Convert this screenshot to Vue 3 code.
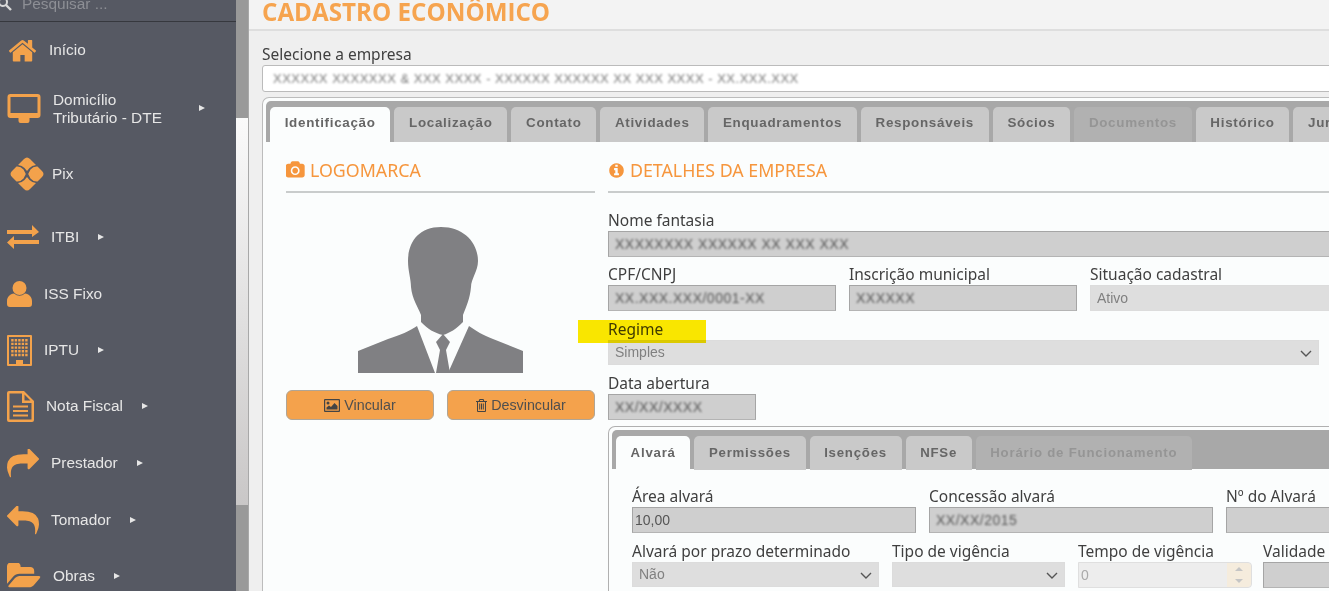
<script setup>
const buildingDots = () => {
  let d = ''
  for (let r = 0; r < 5; r++) {
    for (let c = 0; c < 5; c++) {
      d += `M${4.2 + c * 3.5} ${4 + r * 3.7}h2.4v2.4h-2.4z`
    }
  }
  return d
}

const menu = [
  { label: 'Início', h: 56, w: 29, ih: 23, vb: '35 220 1722 1320', d: 'M1472 992v480q0 26-19 45t-45 19h-384v-384h-256v384h-384q-26 0-45-19t-19-45v-480q0-1 .5-3t.5-3l575-474 575 474q1 2 1 6zm223-69l-62 74q-8 9-21 11h-3q-13 0-21-7l-692-577-692 577q-12 8-24 7-13-2-21-11l-62-74q-8-10-7-23.5t11-21.5l719-599q32-26 76-26t76 26l244 204v-195q0-14 9-23t23-9h192q14 0 23 9t9 23v408l219 182q10 8 11 21.5t-7 23.5z', left: 8 },
  { label: 'Domicílio Tributário - DTE', h: 60, w: 34, ih: 29, vb: '0 0 33 29', d: 'M3 0H30a3 3 0 0 1 3 3V21a3 3 0 0 1-3 3H3a3 3 0 0 1-3-3V3a3 3 0 0 1 3-3ZM3 3V19H30V3ZM11 24H22V27a2 2 0 0 1-2 2H13a2 2 0 0 1-2-2Z', arrow: true, wrap: true },
  { label: 'Pix', h: 70, w: 34, ih: 34, vb: '0 0 34 34', d: 'M14 2Q17-1 20 2L26 8Q22 8.5 19.5 11L17 14L14.5 11Q12 8.5 8 8ZM14 32Q17 35 20 32L26 26Q22 25.5 19.5 23L17 20L14.5 23Q12 25.5 8 26ZM2 14Q-1 17 2 20L6.5 24.5Q10.5 25 13.5 21.5L15.8 17L13.5 12.5Q10.5 9 6.5 9.5ZM32 14Q35 17 32 20L27.5 24.5Q23.5 25 20.5 21.5L18.2 17L20.5 12.5Q23.5 9 27.5 9.5Z', left: 10, small: true },
  { label: 'ITBI', h: 58, w: 32, ih: 24, vb: '0 0 32 24', d: 'M0 5H25V0L32 7L25 12V9H0ZM32 15H7V11L0 17.5L7 24V19H32Z', arrow: true },
  { label: 'ISS Fixo', h: 56, w: 25, ih: 26, vb: '0 0 25 26', d: 'M12.5 0a7 7 0 1 1 0 14a7 7 0 1 1 0-14ZM0 23V20C0 16 3 13 7 12.5Q12.5 17 18 12.5C22 13 25 16 25 20V23Q25 26 22 26H3Q0 26 0 23Z' },
  { label: 'IPTU', h: 56, w: 25, ih: 31, vb: '0 0 25 31', d: 'M1 0H24a1 1 0 0 1 1 1V30a1 1 0 0 1-1 1H1a1 1 0 0 1-1-1V1a1 1 0 0 1 1-1ZM2 2V29H9V25H16V29H23V2Z' + buildingDots(), arrow: true },
  { label: 'Nota Fiscal', h: 56, w: 27, ih: 31, vb: '0 0 27 31', d: 'M2 0H17L27 10V29a2 2 0 0 1-2 2H2a2 2 0 0 1-2-2V2a2 2 0 0 1 2-2ZM2.5 2.5V28.5H24.5V12H15V2.5ZM17.5 3.5V9.5H23.5ZM6 14.5H21V16.5H6ZM6 19H21V21H6ZM6 23.5H21V25.5H6Z', arrow: true },
  { label: 'Prestador', h: 58, w: 32, ih: 29, vb: '0 128 1792 1536', d: 'M1792 640q0 26-19 45l-512 512q-19 19-45 19t-45-19-19-45v-256h-224q-98 0-175.5 6t-154 21.5-133 42.5-105.5 69.5-80 101-48.5 138.5-17.5 181q0 55 5 123 0 6 2.5 23.5t2.5 26.5q0 15-8.5 25t-23.5 10q-16 0-28-17-7-9-13-22t-13.5-30-10.5-24q-127-285-127-451 0-199 53-333 162-403 875-403h224v-256q0-26 19-45t45-19 45 19l512 512q19 19 19 45z', arrow: true },
  { label: 'Tomador', h: 56, w: 32, ih: 29, vb: '0 128 1792 1536', d: 'M1792 1120q0 166-127 451-3 7-10.5 24t-13.5 30-13 22q-12 17-28 17-15 0-23.5-10t-8.5-25q0-9 2.5-26.5t2.5-23.5q5-68 5-123 0-101-17.5-181t-48.5-138.5-80-101-105.5-69.5-133-42.5-154-21.5-175.5-6h-224v256q0 26-19 45t-45 19-45-19l-512-512q-19-19-19-45t19-45l512-512q19-19 45-19t45 19 19 45v256h224q713 0 875 403 53 134 53 333z', arrow: true },
  { label: 'Obras', h: 56, w: 34, ih: 26, vb: '0 256 1920 1280', d: 'M1879 952q0 31-31 66l-336 396q-43 51-120.5 86.5t-143.5 35.5h-1088q-34 0-60.5-13t-26.5-43q0-31 31-66l336-396q43-51 120.5-86.5t143.5-35.5h1088q34 0 60.5 13t26.5 43zm-343-344v160h-832q-94 0-197 47.5t-164 119.5l-337 396-5 6q0-4-.5-12.5t-.5-12.5v-960q0-92 66-158t158-66h320q92 0 158 66t66 158v32h544q92 0 158 66t66 158z', arrow: true }
]

const tabs = [
  { label: 'Identificação', active: true },
  { label: 'Localização' },
  { label: 'Contato' },
  { label: 'Atividades' },
  { label: 'Enquadramentos' },
  { label: 'Responsáveis' },
  { label: 'Sócios' },
  { label: 'Documentos', disabled: true },
  { label: 'Histórico' },
  { label: 'Jurídico' }
]

const subTabs = [
  { label: 'Alvará', active: true },
  { label: 'Permissões' },
  { label: 'Isenções' },
  { label: 'NFSe' },
  { label: 'Horário de Funcionamento', disabled: true }
]
</script>

<template>
  <div class="page">
    <aside class="sidebar">
      <div class="search">
        <svg class="search-icon" viewBox="0 0 14 14" width="14" height="14">
          <circle cx="5" cy="5" r="4" fill="none" stroke="#d8d8d8" stroke-width="2" />
          <path d="M8 8l5 5" stroke="#d8d8d8" stroke-width="2.4" />
        </svg>
        <span>Pesquisar ...</span>
      </div>
      <a
        v-for="item in menu"
        :key="item.label"
        class="menu-item"
        :class="{ 'has-wrap': item.wrap, 'is-small': item.small }"
        :style="{ height: `${item.h}px`, paddingLeft: `${item.left || 7}px` }"
      >
        <svg class="menu-icon" :viewBox="item.vb" :width="item.w" :height="item.ih">
          <path :d="item.d" fill-rule="evenodd" />
        </svg>
        <span class="menu-label">{{ item.label }}</span>
        <i v-if="item.arrow" class="caret"></i>
      </a>
    </aside>

    <div class="scrollbar">
      <div class="scroll-thumb"></div>
    </div>

    <main class="main">
      <header class="title-bar">
        <h1>CADASTRO ECONÔMICO</h1>
      </header>

      <div class="content">
        <label class="field-label">Selecione a empresa</label>
        <div class="company-select"><span class="smudge">XXXXXX XXXXXXX & XXX XXXX - XXXXXX XXXXXX XX XXX XXXX - XX.XXX.XXX</span></div>

        <section class="card">
          <nav class="tabs">
            <span
              v-for="tab in tabs"
              :key="tab.label"
              class="tab"
              :class="{ active: tab.active, disabled: tab.disabled }"
            >{{ tab.label }}</span>
          </nav>

          <div class="card-body">
            <div class="logo-col">
              <h2 class="section-title">
                <svg viewBox="0 0 1920 1792" width="19" height="18">
                  <path d="M928 672q119 0 203.5 84.5t84.5 203.5-84.5 203.5-203.5 84.5-203.5-84.5-84.5-203.5 84.5-203.5 203.5-84.5zm704-416q106 0 181 75t75 181v896q0 106-75 181t-181 75h-1408q-106 0-181-75t-75-181v-896q0-106 75-181t181-75h224l51-136q19-49 69.5-84.5t103.5-35.5h512q53 0 103.5 35.5t69.5 84.5l51 136h224zm-704 1152q185 0 316.5-131.5t131.5-316.5-131.5-316.5-316.5-131.5-316.5 131.5-131.5 316.5 131.5 316.5 316.5 131.5z" />
                </svg>
                LOGOMARCA
              </h2>
              <div class="avatar">
                <svg viewBox="0 0 165 148" width="165" height="148">
                  <g fill="#808083">
                    <path d="M83 2C60 2 50 18 50 36C50 46 53 54 53 62C54 74 60 82 63 90L63 97C70 104 76 108 85 110C92 108 98 104 105 97L105 90C108 82 112 74 113 62C113 54 120 46 120 36C120 18 106 2 83 2Z" />
                    <path d="M0 148V126L30 114C42 110 52 106 59 101L77 148Z" />
                    <path d="M165 148V126L135 114C125 110 118 106 111 101L90 148Z" />
                    <path d="M85 109L92 117L88 125L92 148H78L82 125L78 117Z" />
                  </g>
                </svg>
              </div>
              <div class="logo-actions">
                <button type="button" class="btn">
                  <svg viewBox="0 0 16 13" width="16" height="13">
                    <path fill="#444" fill-rule="evenodd" d="M1 0H15a1 1 0 0 1 1 1V12a1 1 0 0 1-1 1H1a1 1 0 0 1-1-1V1a1 1 0 0 1 1-1ZM1.2 1.2V11.8H14.8V1.2ZM4 2.5a1.5 1.5 0 1 1 0 3a1.5 1.5 0 1 1 0-3ZM2.5 10.5V8.5L5 6.5L7 8L10.5 4L13.5 7V10.5Z" />
                  </svg>
                  Vincular
                </button>
                <button type="button" class="btn">
                  <svg viewBox="0 0 11 13" width="11" height="13">
                    <path fill="#444" fill-rule="evenodd" d="M3.5 0H7.5L8.3 2H11V3H10V12a1 1 0 0 1-1 1H2a1 1 0 0 1-1-1V3H0V2H2.7ZM4.2 1L3.9 2H7.1L6.8 1ZM2 3V12H9V3ZM3.2 4.5H4.2V10.5H3.2ZM5 4.5H6V10.5H5ZM6.8 4.5H7.8V10.5H6.8Z" />
                  </svg>
                  Desvincular
                </button>
              </div>
            </div>

            <div class="details-col">
              <h2 class="section-title">
                <svg viewBox="0 0 1792 1792" width="17" height="17">
                  <path d="M1152 1376v-160q0-14-9-23t-23-9h-96v-512q0-14-9-23t-23-9h-320q-14 0-23 9t-9 23v160q0 14 9 23t23 9h96v320h-96q-14 0-23 9t-9 23v160q0 14 9 23t23 9h448q14 0 23-9t9-23zm-128-896v-160q0-14-9-23t-23-9h-192q-14 0-23 9t-9 23v160q0 14 9 23t23 9h192q14 0 23-9t9-23zm640 416q0 209-103 385.5t-279.5 279.5-385.5 103-385.5-103-279.5-279.5-103-385.5 103-385.5 279.5-279.5 385.5-103 385.5 103 279.5 279.5 103 385.5z" />
                </svg>
                DETALHES DA EMPRESA
              </h2>

              <div class="form">
                <div class="highlight"></div>

                <div class="field">
                  <label class="field-label">Nome fantasia</label>
                  <div class="input locked"><span class="smudge">XXXXXXXX XXXXXX XX XXX XXX</span></div>
                </div>

                <div class="row">
                  <div class="field w228">
                    <label class="field-label">CPF/CNPJ</label>
                    <div class="input locked"><span class="smudge">XX.XXX.XXX/0001-XX</span></div>
                  </div>
                  <div class="field w228">
                    <label class="field-label">Inscrição municipal</label>
                    <div class="input locked"><span class="smudge">XXXXXX</span></div>
                  </div>
                  <div class="field w240">
                    <label class="field-label">Situação cadastral</label>
                    <div class="input muted">Ativo</div>
                  </div>
                </div>

                <div class="field w711">
                  <label class="field-label">Regime</label>
                  <div class="input muted select">
                    Simples
                    <svg class="chev" viewBox="0 0 12 7" width="12" height="7"><path d="M1 1l5 5 5-5" /></svg>
                  </div>
                </div>

                <div class="field w148 tight">
                  <label class="field-label">Data abertura</label>
                  <div class="input locked"><span class="smudge">XX/XX/XXXX</span></div>
                </div>

                <section class="card nested">
                  <nav class="tabs sub">
                    <span
                      v-for="tab in subTabs"
                      :key="tab.label"
                      class="tab"
                      :class="{ active: tab.active, disabled: tab.disabled }"
                    >{{ tab.label }}</span>
                  </nav>

                  <div class="nested-body">
                    <div class="row">
                      <div class="field w284">
                        <label class="field-label">Área alvará</label>
                        <div class="input locked flush">10,00</div>
                      </div>
                      <div class="field w284">
                        <label class="field-label">Concessão alvará</label>
                        <div class="input locked"><span class="smudge">XX/XX/2015</span></div>
                      </div>
                      <div class="field w240">
                        <label class="field-label">Nº do Alvará</label>
                        <div class="input locked"></div>
                      </div>
                    </div>
                    <div class="row row-low">
                      <div class="field w247">
                        <label class="field-label">Alvará por prazo determinado</label>
                        <div class="input muted select">
                          Não
                          <svg class="chev" viewBox="0 0 12 7" width="12" height="7"><path d="M1 1l5 5 5-5" /></svg>
                        </div>
                      </div>
                      <div class="field w173">
                        <label class="field-label">Tipo de vigência</label>
                        <div class="input muted select">
                          <svg class="chev" viewBox="0 0 12 7" width="12" height="7"><path d="M1 1l5 5 5-5" /></svg>
                        </div>
                      </div>
                      <div class="field w174">
                        <label class="field-label">Tempo de vigência</label>
                        <div class="input faded flush">
                          0
                          <span class="spinner">
                            <i class="up"></i>
                            <i class="down"></i>
                          </span>
                        </div>
                      </div>
                      <div class="field w120 close">
                        <label class="field-label">Validade</label>
                        <div class="input locked"></div>
                      </div>
                    </div>
                  </div>
                </section>
              </div>
            </div>
          </div>
        </section>
      </div>
    </main>
  </div>
</template>

<style>
html,
body {
  margin: 0;
  overflow: hidden;
}
</style>

<style scoped>
.page {
  display: flex;
  width: 1329px;
  height: 591px;
  overflow: hidden;
  background: #efefef;
  font-family: "Liberation Sans", Arial, sans-serif;
}

.sidebar {
  flex: 0 0 236px;
  background: #565963;
  color: #e6e6e6;
  font-size: 15.4px;
}

.search {
  display: flex;
  align-items: flex-end;
  gap: 10px;
  height: 21px;
  overflow: hidden;
  border-bottom: 1px solid #36383e;
  color: #8d8f95;
  line-height: 20px;
}

.search span {
  transform: translateY(-7px);
  white-space: nowrap;
}

.search-icon {
  flex: none;
  margin-left: -2px;
  transform: translateY(-10px);
}

.menu-item {
  display: flex;
  align-items: center;
  gap: 12px;
  box-sizing: border-box;
}

.menu-icon {
  flex: none;
  fill: #f3a24b;
}

.menu-label {
  line-height: 18px;
  white-space: nowrap;
}

.has-wrap .menu-label {
  width: 115px;
  margin-right: 19px;
  padding-top: 2px;
  white-space: normal;
}

.is-small {
  gap: 8px;
  padding-top: 1px;
}

.caret {
  width: 0;
  height: 0;
  margin-left: 7px;
  border-left: 6px solid #e6e6e6;
  border-top: 3.5px solid transparent;
  border-bottom: 3.5px solid transparent;
}

.has-wrap .caret {
  margin-left: 0;
}

.scrollbar {
  flex: 0 0 12px;
  background: #999;
  border-right: 1px solid #a8a8a8;
}

.scroll-thumb {
  height: 387px;
  margin-top: 118px;
  background: linear-gradient(180deg, #fafafa, #c9c7c7);
}

.main {
  flex: 1;
  min-width: 0;
  overflow: hidden;
}

.title-bar {
  height: 29px;
  background: #f3f3f3;
  border-bottom: 2px solid #dedede;
  padding-left: 13px;
  overflow: hidden;
}

.title-bar h1 {
  margin: 0;
  color: #f6a44f;
  font-family: "Open Sans", sans-serif;
  font-size: 24.2px;
  line-height: 24px;
  font-weight: 700;
  white-space: nowrap;
}

.content {
  width: 1100px;
  padding: 14px 0 0 13px;
}

.field-label {
  display: block;
  height: 20px;
  color: #3f3f3f;
  font-family: "Noto Sans", sans-serif;
  font-size: 15.5px;
  line-height: 18px;
  white-space: nowrap;
}

.company-select {
  height: 25px;
  margin-bottom: 5px;
  padding-left: 10px;
  background: #fff;
  border: 1px solid #bbb;
  border-radius: 3px;
  font-size: 13px;
  line-height: 25px;
  color: #777;
}

.smudge {
  display: inline-block;
  filter: blur(1px);
  letter-spacing: 0.5px;
  white-space: nowrap;
}

.card {
  padding: 3px 0 40px 3px;
  background: #fbfdfd;
  border: 1px solid #bcbcbc;
  border-radius: 7px 0 0 0;
  border-right: 0;
}

.tabs {
  display: flex;
  gap: 4px;
  height: 35px;
  padding: 6px 0 0 4px;
  background: #a8a8a8;
  border-radius: 5px 0 0 0;
  font-size: 13.4px;
  font-weight: 700;
  letter-spacing: 0.7px;
}

.tab {
  flex: none;
  box-sizing: border-box;
  height: 35px;
  padding: 0 14.7px;
  background: #c9c9c9;
  border-radius: 5px 5px 0 0;
  color: #666;
  line-height: 31px;
  white-space: nowrap;
}

.tab.active {
  height: 36px;
  background: #fbfdfd;
  color: #666;
}

.tab.disabled {
  background: #b1b1b1;
  color: #959595;
}

.card-body {
  display: flex;
  gap: 13px;
  padding: 0 0 0 20px;
}

.logo-col {
  flex: 0 0 309px;
}

.details-col {
  flex: 0 0 760px;
}

.section-title {
  display: flex;
  align-items: center;
  gap: 5px;
  height: 51px;
  margin: 0 0 18px;
  padding-top: 7px;
  box-sizing: border-box;
  border-bottom: 2px solid #c9cccc;
  color: #f6963d;
  fill: #f6963d;
  font-family: "Noto Sans", sans-serif;
  font-size: 17.8px;
  font-weight: 400;
  white-space: nowrap;
}

.avatar {
  display: flex;
  justify-content: center;
  margin: 32px 0 17px;
}

.logo-actions {
  display: flex;
  justify-content: space-between;
}

.btn {
  display: flex;
  align-items: center;
  justify-content: center;
  gap: 4px;
  width: 148px;
  height: 30px;
  padding: 0;
  background: #f4a24c;
  border: 1px solid #b0a595;
  border-radius: 6px;
  color: #4f4f4f;
  font-family: "Liberation Sans", Arial, sans-serif;
  font-size: 14.3px;
}

.form {
  position: relative;
  display: flex;
  flex-direction: column;
  gap: 8px;
}

.highlight {
  position: absolute;
  left: -30px;
  top: 109px;
  z-index: 2;
  width: 128px;
  height: 23px;
  background: #fde800;
  mix-blend-mode: multiply;
}

.row {
  display: flex;
  gap: 13px;
}

.field {
  flex: none;
}

.w711 {
  width: 711px;
  margin-top: 1px;
}

.w228 {
  width: 228px;
}

.w240 {
  width: 260px;
}

.w148 {
  width: 148px;
}

.w284 {
  width: 284px;
}

.w247 {
  width: 247px;
}

.w173 {
  width: 173px;
}

.w174 {
  width: 174px;
}

.w120 {
  width: 120px;
}

.close {
  margin-left: -2px;
}

.tight {
  margin-top: 1px;
}

.input {
  position: relative;
  box-sizing: border-box;
  height: 26px;
  padding: 0 6px;
  border: 1px solid #a5a5a5;
  font-size: 14px;
  line-height: 24px;
  color: #555;
}

.flush {
  padding-left: 2px;
}

.locked {
  background: #cfcfcf;
  border-bottom-color: #b4b4b4;
}

.muted {
  background: #dedede;
  border-color: #dcdcdc;
  color: #808080;
}

.faded {
  background: #ededed;
  border-color: #dfdfdf;
  border-radius: 0 4px 4px 0;
  color: #a9a9a9;
}

.select {
  height: 25px;
  line-height: 23px;
}

.chev {
  position: absolute;
  right: 6px;
  top: 9px;
  fill: none;
  stroke: #555;
  stroke-width: 1.4;
}

.spinner {
  position: absolute;
  top: 0;
  right: 0;
  display: flex;
  flex-direction: column;
  align-items: center;
  justify-content: space-around;
  width: 24px;
  height: 100%;
  background: #f5ecdd;
  border-radius: 0 4px 4px 0;
}

.spinner i {
  width: 0;
  height: 0;
  border-left: 4px solid transparent;
  border-right: 4px solid transparent;
}

.spinner .up {
  border-bottom: 4px solid #c5c5c5;
}

.spinner .down {
  border-top: 4px solid #c5c5c5;
}

.nested {
  margin-top: -2px;
  border-color: #b0b0b0;
}

.tabs.sub {
  height: 33px;
  padding: 6px 0 0 4px;
  font-size: 13.2px;
  letter-spacing: 0.8px;
}

.tabs.sub .tab {
  height: 34px;
  line-height: 33px;
  padding: 0 14.6px;
}

.tabs.sub .tab.active {
  height: 35px;
}

.nested-body {
  padding: 18px 0 0 20px;
}

.row-low {
  margin-top: 9px;
}
</style>
